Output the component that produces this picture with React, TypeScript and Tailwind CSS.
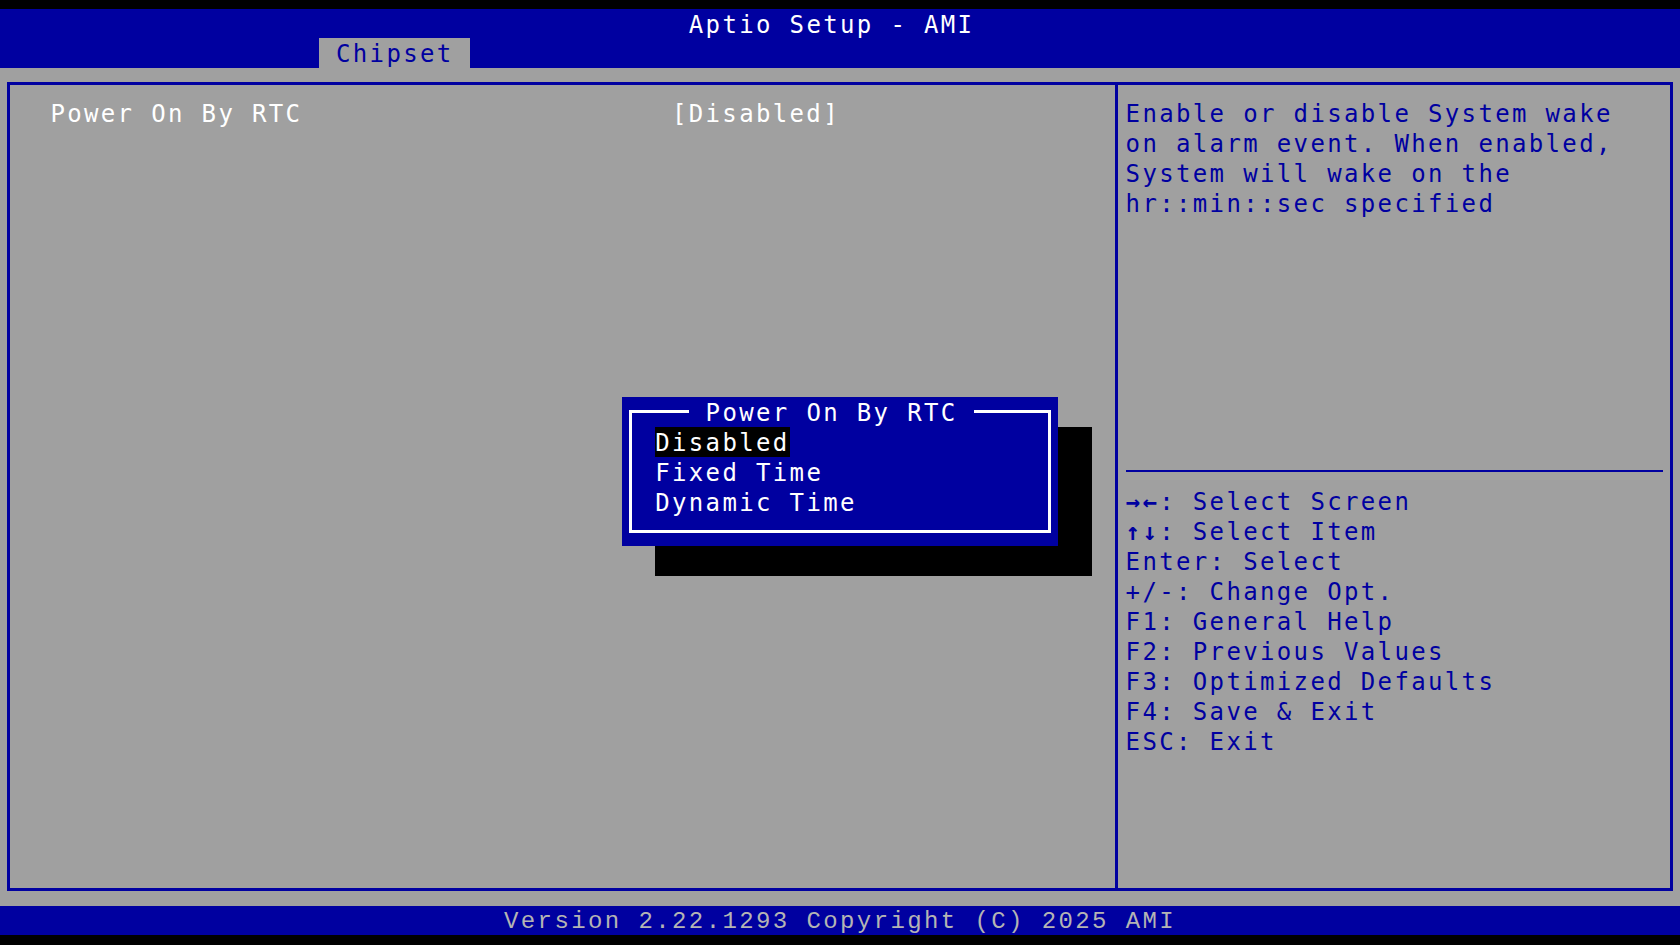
// App.tsx - Aptio setup screen, chipset tab with option popup
const ROW = "h-[30px] leading-[33px]";

const helpLines = [
  "Enable or disable System wake",
  "on alarm event. When enabled,",
  "System will wake on the",
  "hr::min::sec specified",
];

const keyLines: [string, string][] = [
  ["→←", ": Select Screen"],
  ["↑↓", ": Select Item"],
  ["", "Enter: Select"],
  ["", "+/-: Change Opt."],
  ["", "F1: General Help"],
  ["", "F2: Previous Values"],
  ["", "F3: Optimized Defaults"],
  ["", "F4: Save & Exit"],
  ["", "ESC: Exit"],
];

function OptionPopup() {
  return (
    <>
      {/* shadow */}
      <div className="absolute left-[645.2px] top-[341.9px] w-[436.8px] h-[149.35px] bg-black" />
      <div className="absolute left-[611.6px] top-[312px] w-[436.8px] h-[149.35px] bg-[#0000a0] py-[13.4px] px-[7px]">
        <div className="relative h-full border-[3px] border-white pt-[13.5px] pl-[23.6px] text-white">
          <div className={`absolute left-[57.2px] top-[-16.5px] w-[285.6px] bg-[#0000a0] ${ROW}`}>
            {" Power On By RTC "}
          </div>
          <div className={ROW}>
            <span className="inline-block h-[30px] bg-black">Disabled</span>
          </div>
          <div className={ROW}>Fixed Time</div>
          <div className={ROW}>Dynamic Time</div>
        </div>
      </div>
    </>
  );
}

export default function App() {
  return (
    <div className="w-[1680px] h-[945px] bg-black flex flex-col overflow-hidden whitespace-pre font-['DejaVu_Sans_Mono',monospace] text-[24px] tracking-[2.35px]">
      <div className="h-[9px] shrink-0" />

      {/* title + tabs */}
      <header className="h-[59px] shrink-0 bg-[#0000a0] flex flex-col">
        <div className="h-[29px] leading-[32px] pl-[688.8px] text-white">Aptio Setup - AMI</div>
        <div className="h-[30px] flex pl-[319.2px]">
          <div className="w-[151.2px] bg-[#a0a0a0] text-[#0000a0] leading-[33px]">{" Chipset"}</div>
        </div>
      </header>

      {/* main body */}
      <main className="h-[838px] shrink-0 bg-[#a0a0a0] pt-[14px] pb-[15px] px-[7px]">
        <div className="relative h-full border-[3px] border-[#0000a0] flex">
          <section className="w-[1105px] pt-[13.3px] pl-[40.4px] text-white">
            <div className={ROW}>{"Power On By RTC                      [Disabled]"}</div>
          </section>

          <div className="w-[3px] bg-[#0000a0]" />

          <aside className="flex-1 flex flex-col pt-[13.3px] pl-[7.6px] pr-[7px] text-[#0000a0]">
            {helpLines.map((l) => (
              <div key={l} className={ROW}>
                {l}
              </div>
            ))}
            <div className="h-[238px] shrink-0" />
            <div className="h-[30px] shrink-0 flex items-center">
              <div className="h-[2px] w-full bg-[#0000a0]" />
            </div>
            {keyLines.map(([arrows, rest]) => (
              <div key={rest} className={`shrink-0 ${ROW}`}>
                {arrows && <span className="font-bold">{arrows}</span>}
                {rest}
              </div>
            ))}
          </aside>

          <OptionPopup />
        </div>
      </main>

      {/* footer */}
      <footer className="h-[29px] shrink-0 bg-[#0000a0] pl-[504px] leading-[31px] text-[#b4b4b4] font-['Liberation_Mono',monospace] tracking-[2.4px]">
        Version 2.22.1293 Copyright (C) 2025 AMI
      </footer>
      <div className="flex-1" />
    </div>
  );
}
